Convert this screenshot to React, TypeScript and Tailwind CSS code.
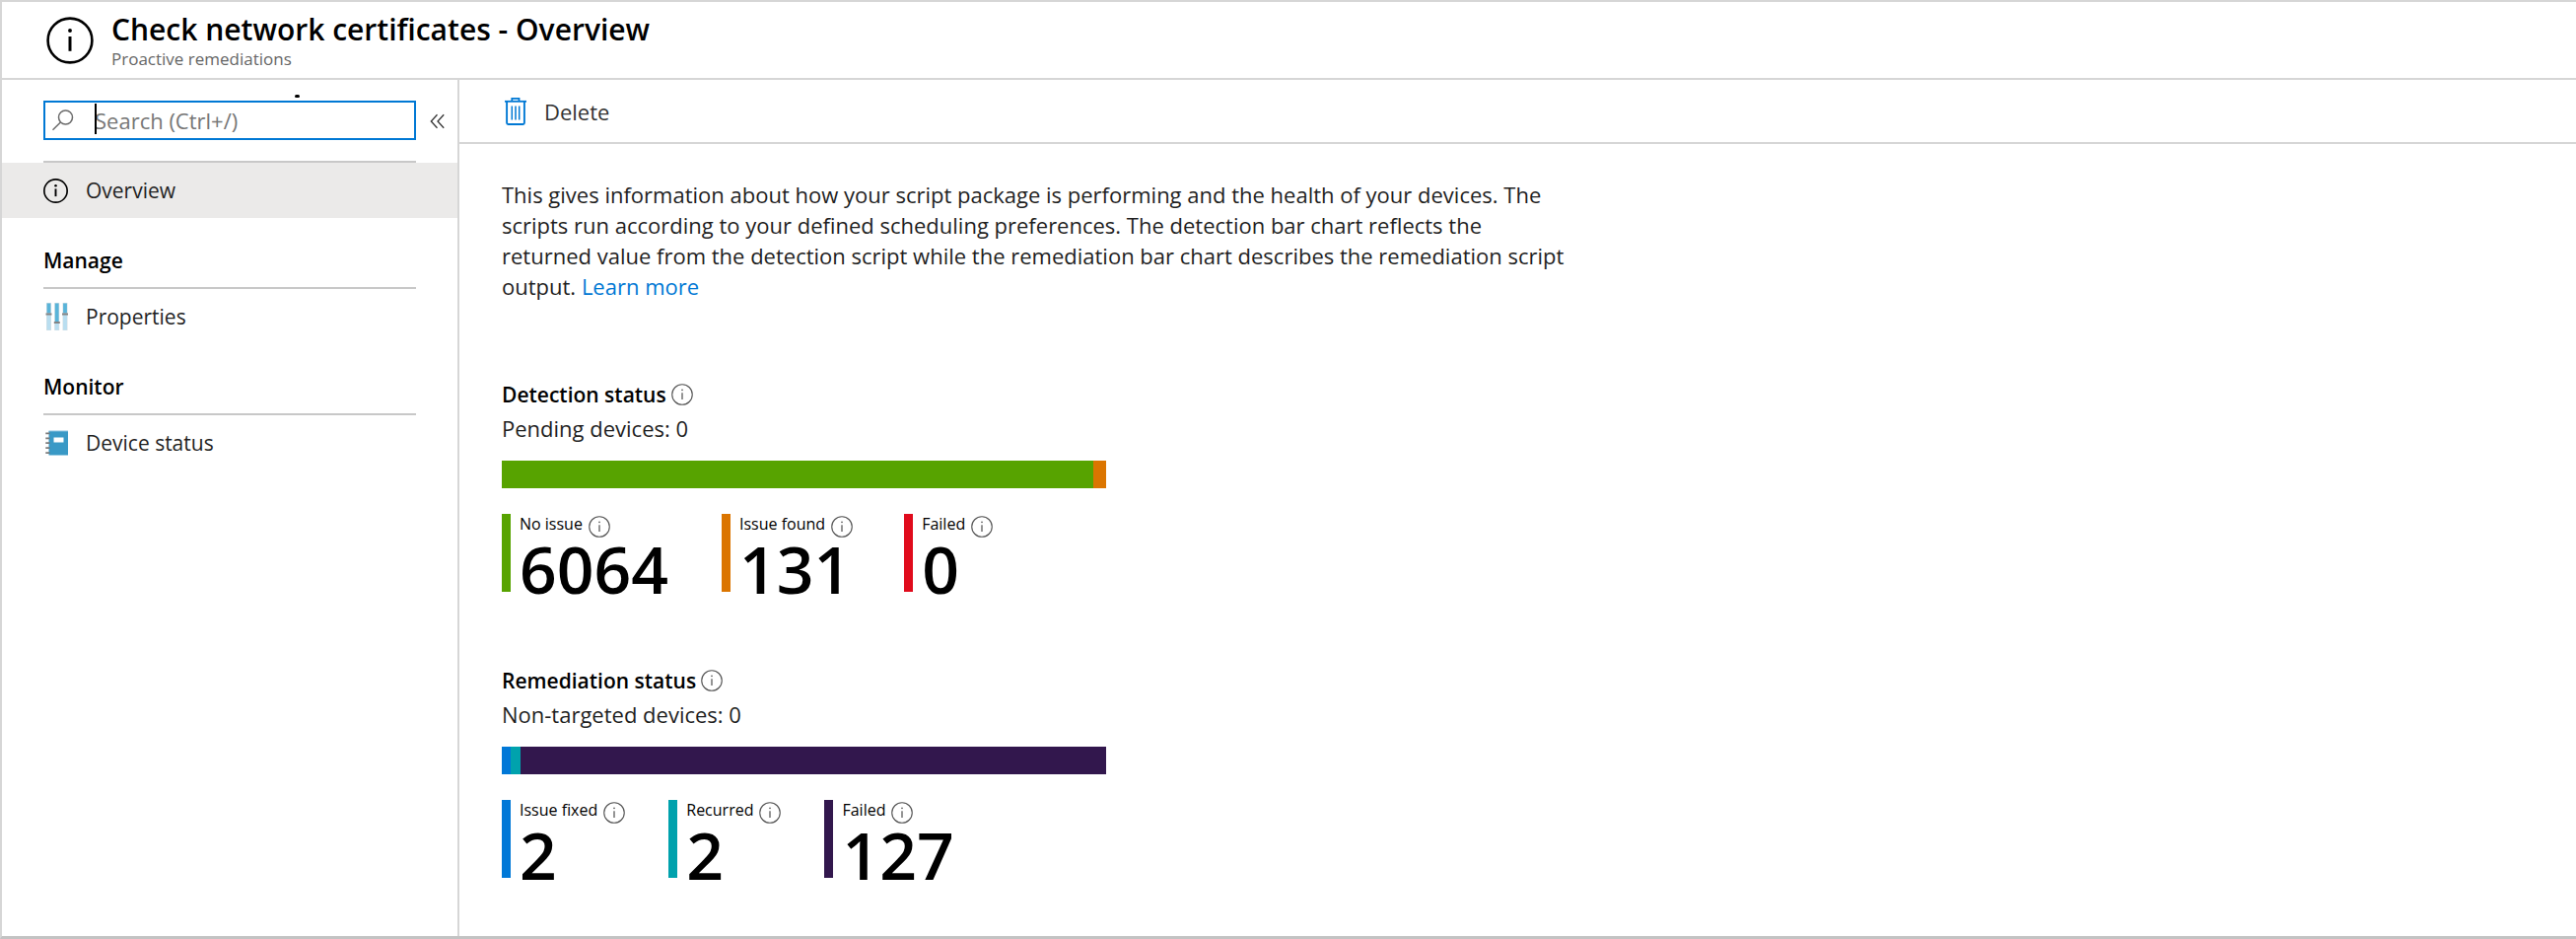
import React from "react";

type Stat = { label: string; value: number; color: string };
type Segment = { color: string; share: number };

function InfoIcon({ className, stroke = 1.2 }: { className?: string; stroke?: number }) {
  return (
    <svg viewBox="0 0 24 24" className={className} fill="none" stroke="currentColor" aria-hidden="true">
      <circle cx="12" cy="12" r="11.2" strokeWidth={stroke} />
      <path d="M12 10v7.4" strokeWidth={stroke * 1.15} />
      <circle cx="12" cy="7" r={stroke * 0.75} fill="currentColor" stroke="none" />
    </svg>
  );
}

function SearchIcon() {
  return (
    <svg viewBox="0 0 24 24" className="h-6 w-6 shrink-0 text-[#6b6b6b]" fill="none" stroke="currentColor" strokeWidth="1.5" aria-hidden="true">
      <circle cx="14.5" cy="9" r="7" />
      <path d="M9.4 14 1.5 21.8" />
    </svg>
  );
}

function CollapseIcon() {
  return (
    <svg viewBox="0 0 16 18" className="h-[18px] w-4" fill="none" stroke="#333" strokeWidth="1.3" aria-hidden="true">
      <path d="M7.500 3.200 1.300 10l6.200 6.800M14.200 3.200 8 10l6.200 6.800" />
    </svg>
  );
}

function TrashIcon() {
  return (
    <svg viewBox="0 0 22 28" className="h-7 w-[22px]" fill="none" stroke="#0078d4" aria-hidden="true">
      <path d="M0 3.800h22" strokeWidth="1.8" />
      <path d="M7.300 3.400V.9h7.200v2.500" strokeWidth="1.8" />
      <path d="M2.100 4v21.600q0 1.400 1.400 1.400h15q1.400 0 1.400-1.400V4" strokeWidth="1.9" />
      <path d="M7.300 8.500v14M11 8.500v14M14.700 8.500v14" strokeWidth="1.5" />
    </svg>
  );
}

function PropertiesIcon() {
  return (
    <svg viewBox="0 0 24 28" className="h-7 w-6" aria-hidden="true">
      <g fill="#d5dfe3">
        <path d="M2 0h5v28H2zM10.200 0h5v28h-5zM18.500 0h5v28h-5z" />
      </g>
      <path fill="#b9def0" d="M2.600 12h3.800v15.400H2.600zM10.800 21h3.800v6.400h-3.800zM19.100 12h3.800v15.400h-3.800z" />
      <path fill="#59b4d9" d="M2.600.6h3.800v9.900H2.600zM10.800.6h3.800V19h-3.800zM19.100.6h3.800v9.900h-3.800z" />
      <path fill="#848484" d="M1.500 10.500H7.500v2h-6zM9.800 19h6v2h-6zM18 10.500h6v2h-6z" />
    </svg>
  );
}

function NotebookIcon() {
  return (
    <svg viewBox="0 0 24 26" className="h-[26px] w-6" aria-hidden="true">
      <path fill="#3999c6" d="M4.500 1H24v24.500H4.500z" />
      <path fill="#8fc3de" d="M4.500.5H24v1H4.500z" />
      <path fill="#fff" d="M9.500 7.500h10v5h-10z" />
      <path stroke="#7a7a7a" strokeWidth="1.7" d="M1.300 3.300h4.200M1.300 8.300h4.200M1.300 13.200h4.200M1.300 18.200h4.200M1.300 23.100h4.200" />
    </svg>
  );
}

function NavItem({ icon, label, active }: { icon: React.ReactNode; label: string; active?: boolean }) {
  return (
    <a
      href="#"
      aria-current={active ? "page" : undefined}
      className={`flex h-14 items-center gap-[18px] pl-[42px] text-[21px] leading-8 text-[#1f1f1f] ${active ? "bg-[#ebeae9]" : ""}`}
    >
      <span className="flex w-[25px] justify-center">{icon}</span>
      {label}
    </a>
  );
}

function NavSection({ title, children }: { title: string; children: React.ReactNode }) {
  return (
    <section className="pt-6">
      <h2 className="mx-[42px] h-12 border-b-2 border-[#c8c8c8] text-[21px] font-semibold leading-[38px] text-black">
        {title}
      </h2>
      {children}
    </section>
  );
}

function StatusPanel({
  title,
  note,
  segments,
  stats,
}: {
  title: string;
  note: string;
  segments: Segment[];
  stats: Stat[];
}) {
  return (
    <section>
      <div className="flex h-8 items-center gap-[5px]">
        <h2 className="text-[21px] font-semibold leading-8 text-black">{title}</h2>
        <InfoIcon className="h-[22px] w-[22px] text-[#555]" />
      </div>
      <p className="pt-0.5 text-[22px] leading-8 text-[#1f1f1f]">{note}</p>
      <div className="mt-[17px] flex h-7 w-full max-w-[613px]">
        {segments.map((s) => (
          <div key={s.color} className={s.color} style={{ flexGrow: s.share, flexBasis: 0 }} />
        ))}
      </div>
      <dl className="mt-[26px] flex gap-11">
        {stats.map((s) => (
          <div key={s.label} className="flex h-[79px] gap-[9px]">
            <span className={`w-[9px] ${s.color}`} />
            <div>
              <dt className="flex h-6 gap-1.5 text-[16px] leading-5 text-black">
                {s.label}
                <InfoIcon className="mt-0.5 h-[22px] w-[22px] text-[#555]" />
              </dt>
              <dd className="pr-2.5 text-[66px] font-semibold leading-[62px] text-black">{s.value}</dd>
            </div>
          </div>
        ))}
      </dl>
    </section>
  );
}

export default function App() {
  return (
    <div className="flex min-h-screen flex-col border-b-3 border-l-2 border-t-2 border-b-[#c3c3c3] border-l-[#d6d6d6] border-t-[#d6d6d6] bg-white font-['Open_Sans','Noto_Sans',sans-serif]">
      <header className="flex h-[79px] items-center gap-[18px] border-b-2 border-[#d6d6d6] pl-[45px]">
        <InfoIcon className="h-12 w-12 text-black" stroke={1.3} />
        <div className="pt-0.5">
          <h1 className="text-[30px] font-semibold leading-9 text-black">Check network certificates - Overview</h1>
          <p className="text-[17px] leading-6 text-[#666]">Proactive remediations</p>
        </div>
      </header>

      <div className="flex flex-1">
        <nav className="relative w-[464px] shrink-0 border-r-2 border-[#d6d6d6]" aria-label="Resource menu">
          <span className="absolute left-[297px] top-[15px] h-[3px] w-[5px] rounded-sm bg-black" />
          <div className="flex items-center gap-3.5 pl-[42px] pt-[21px]">
            <label className="relative flex h-10 w-[378px] items-center gap-5 border-2 border-[#0078d4] pl-1.5">
              <SearchIcon />
              <input
                type="search"
                aria-label="Search"
                placeholder="Search (Ctrl+/)"
                className="min-w-0 flex-1 text-[22px] leading-8 outline-none placeholder:text-[#777]"
              />
              <span className="absolute left-[50px] top-px h-[31px] w-0.5 bg-black" />
            </label>
            <button type="button" aria-label="Collapse menu">
              <CollapseIcon />
            </button>
          </div>
          <div className="mx-[42px] mt-[21px] h-0.5 bg-[#c8c8c8]" />
          <NavItem active icon={<InfoIcon className="h-[25px] w-[25px] text-black" stroke={1.6} />} label="Overview" />
          <NavSection title="Manage">
            <NavItem icon={<PropertiesIcon />} label="Properties" />
          </NavSection>
          <NavSection title="Monitor">
            <NavItem icon={<NotebookIcon />} label="Device status" />
          </NavSection>
        </nav>

        <main className="flex-1">
          <div className="flex h-[65px] items-center border-b-2 border-[#d6d6d6] pl-[46px]">
            <button type="button" className="flex items-center gap-[18px] text-[22px] leading-8 text-[#333]">
              <TrashIcon />
              Delete
            </button>
          </div>
          <div className="px-[43px] pb-10">
            <p className="max-w-[1080px] pt-9 text-[22px] leading-[31px] text-[#1f1f1f]">
              This gives information about how your script package is performing and the health of your devices. The
              scripts run according to your defined scheduling preferences. The detection bar chart reflects the
              returned value from the detection script while the remediation bar chart describes the remediation script
              output.{" "}
              <a href="#" className="text-[#0078d4]">
                Learn more
              </a>
            </p>
            <div className="flex flex-col gap-[74px] pt-[78px]">
              <StatusPanel
                title="Detection status"
                note="Pending devices: 0"
                segments={[
                  { color: "bg-[#57a300]", share: 6064 },
                  { color: "bg-[#db7500]", share: 131 },
                ]}
                stats={[
                  { label: "No issue", value: 6064, color: "bg-[#57a300]" },
                  { label: "Issue found", value: 131, color: "bg-[#db7500]" },
                  { label: "Failed", value: 0, color: "bg-[#e00b1c]" },
                ]}
              />
              <StatusPanel
                title="Remediation status"
                note="Non-targeted devices: 0"
                segments={[
                  { color: "bg-[#0078d7]", share: 2 },
                  { color: "bg-[#00a2ad]", share: 2 },
                  { color: "bg-[#32174d]", share: 127 },
                ]}
                stats={[
                  { label: "Issue fixed", value: 2, color: "bg-[#0078d7]" },
                  { label: "Recurred", value: 2, color: "bg-[#00a2ad]" },
                  { label: "Failed", value: 127, color: "bg-[#32174d]" },
                ]}
              />
            </div>
          </div>
        </main>
      </div>
    </div>
  );
}
